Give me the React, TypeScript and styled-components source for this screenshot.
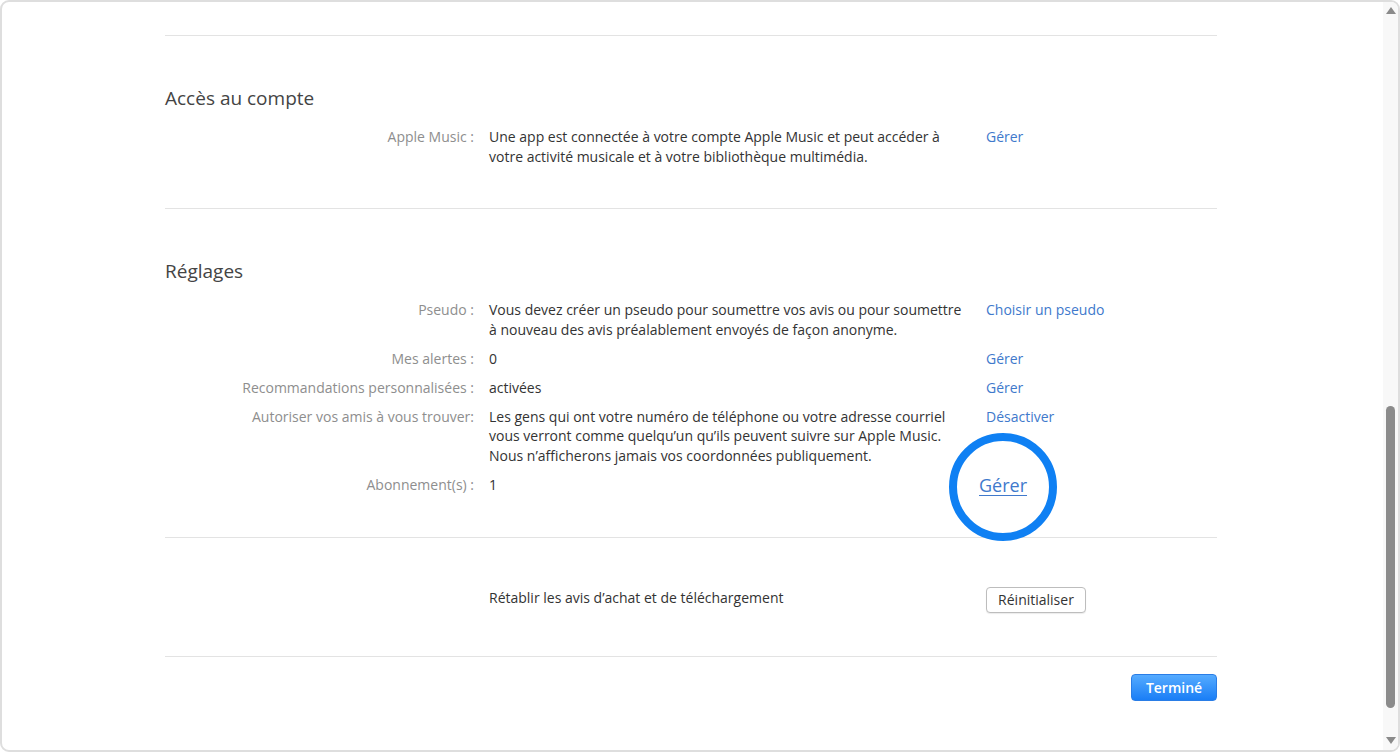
import { createGlobalStyle, styled } from "styled-components";

const GlobalStyle = createGlobalStyle`
  html, body {
    margin: 0;
    padding: 0;
    background: #ffffff;
  }
  body {
    font-family: "Open Sans", "Liberation Sans", sans-serif;
    -webkit-font-smoothing: antialiased;
  }
`;

type Row = {
  label: string;
  value: string;
  action?: string;
  big?: boolean;
};

const accountRows: Row[] = [
  {
    label: "Apple Music :",
    value:
      "Une app est connectée à votre compte Apple Music et peut accéder à votre activité musicale et à votre bibliothèque multimédia.",
    action: "Gérer",
  },
];

const settingsRows: Row[] = [
  {
    label: "Pseudo :",
    value:
      "Vous devez créer un pseudo pour soumettre vos avis ou pour soumettre à nouveau des avis préalablement envoyés de façon anonyme.",
    action: "Choisir un pseudo",
  },
  { label: "Mes alertes :", value: "0", action: "Gérer" },
  { label: "Recommandations personnalisées :", value: "activées", action: "Gérer" },
  {
    label: "Autoriser vos amis à vous trouver:",
    value:
      "Les gens qui ont votre numéro de téléphone ou votre adresse courriel vous verront comme quelqu’un qu’ils peuvent suivre sur Apple Music. Nous n’afficherons jamais vos coordonnées publiquement.",
    action: "Désactiver",
  },
  { label: "Abonnement(s) :", value: "1", action: "Gérer", big: true },
];

function Rows({ rows }: { rows: Row[] }) {
  return (
    <RowGrid>
      {rows.map((r) => (
        <RowLine key={r.label}>
          <Label>{r.label}</Label>
          <Value>{r.value}</Value>
          <Action>
            {r.big ? (
              <Highlighted href="#">{r.action}</Highlighted>
            ) : (
              <ActionLink href="#">{r.action}</ActionLink>
            )}
          </Action>
        </RowLine>
      ))}
    </RowGrid>
  );
}

export default function App() {
  return (
    <>
      <GlobalStyle />
      <Window>
        <Content>
          <Column>
            <Divider />

            <Section>
              <SectionTitle>Accès au compte</SectionTitle>
              <Rows rows={accountRows} />
            </Section>

            <Divider />

            <Section>
              <SectionTitle>Réglages</SectionTitle>
              <Rows rows={settingsRows} />
            </Section>

            <Divider />

            <ResetRow>
              <span />
              <Value>Rétablir les avis d’achat et de téléchargement</Value>
              <Action>
                <PlainButton>Réinitialiser</PlainButton>
              </Action>
            </ResetRow>

            <Divider />

            <Footer>
              <DoneButton>Terminé</DoneButton>
            </Footer>
          </Column>
        </Content>

        <Scrollbar>
          <Arrow $up />
          <Track>
            <Thumb />
          </Track>
          <Arrow />
        </Scrollbar>
      </Window>
    </>
  );
}

const Window = styled.div`
  box-sizing: border-box;
  width: 1400px;
  height: 752px;
  border: 2px solid #dedede;
  border-radius: 9px;
  display: flex;
  overflow: hidden;
  background: #ffffff;
`;

const Content = styled.main`
  flex: 1;
  padding-left: 163px;
`;

const Column = styled.div`
  width: 1052px;
  padding-top: 33px;
`;

const Divider = styled.hr`
  margin: 0;
  border: 0;
  height: 1px;
  background: #e3e3e3;
`;

const Section = styled.section`
  padding: 50px 0 42px;
`;

const SectionTitle = styled.h2`
  margin: 0 0 17px;
  font-size: 19px;
  line-height: 24px;
  font-weight: 400;
  color: #444444;
`;

const RowGrid = styled.div`
  display: flex;
  flex-direction: column;
  gap: 9.5px;
`;

const RowLine = styled.div`
  display: grid;
  grid-template-columns: 309px 482px 1fr;
  column-gap: 15px;
  font-size: 14px;
  line-height: 19.5px;
`;

const Label = styled.div`
  text-align: right;
  color: #8e8e8e;
`;

const Value = styled.div`
  color: #333333;
`;

const Action = styled.div`
  display: flex;
  align-items: flex-start;
`;

const ActionLink = styled.a`
  color: #4079cc;
  text-decoration: none;
`;

const Highlighted = styled.a`
  position: relative;
  margin-left: -7px;
  font-size: 18px;
  line-height: 20px;
  color: #4079cc;
  text-decoration: underline;
  text-underline-offset: 3px;

  &::after {
    content: "";
    position: absolute;
    left: 50%;
    top: 50%;
    width: 92px;
    height: 92px;
    margin: -52px 0 0 -54px;
    border: 8px solid #0f80f3;
    border-radius: 50%;
  }
`;

const ResetRow = styled(RowLine)`
  align-items: center;
  padding: 45px 0 43px;
`;

const PlainButton = styled.button`
  font-family: inherit;
  font-size: 14px;
  color: #333333;
  height: 26px;
  width: 100px;
  padding: 0;
  margin-top: 4px;
  background: #ffffff;
  border: 1px solid #bdbdbd;
  border-radius: 4px;
  box-shadow: 0 1px 1px rgba(0, 0, 0, 0.08);
`;

const Footer = styled.div`
  display: flex;
  justify-content: flex-end;
  padding-top: 17px;
`;

const DoneButton = styled.button`
  font-family: inherit;
  font-size: 14px;
  font-weight: 600;
  color: #ffffff;
  width: 86px;
  height: 27px;
  padding: 0;
  background: linear-gradient(#55abff, #1a7ef6);
  border: 1px solid #2a7de6;
  border-radius: 4px;
`;

const Scrollbar = styled.aside`
  width: 15px;
  background: #f8f8f8;
  display: flex;
  flex-direction: column;
  align-items: center;
`;

const Arrow = styled.div<{ $up?: boolean }>`
  width: 0;
  height: 0;
  margin: ${({ $up }) => ($up ? "5px 0 4px" : "4px 0 6px")};
  border-left: 5px solid transparent;
  border-right: 5px solid transparent;
  ${({ $up }) =>
    $up ? "border-bottom: 7px solid #8a8a8a;" : "border-top: 7px solid #8a8a8a;"}
`;

const Track = styled.div`
  flex: 1;
  display: flex;
  flex-direction: column;
  align-items: center;
`;

const Thumb = styled.div`
  width: 9px;
  height: 302px;
  margin-top: 388px;
  border-radius: 5px;
  background: #8b8b8b;
`;
